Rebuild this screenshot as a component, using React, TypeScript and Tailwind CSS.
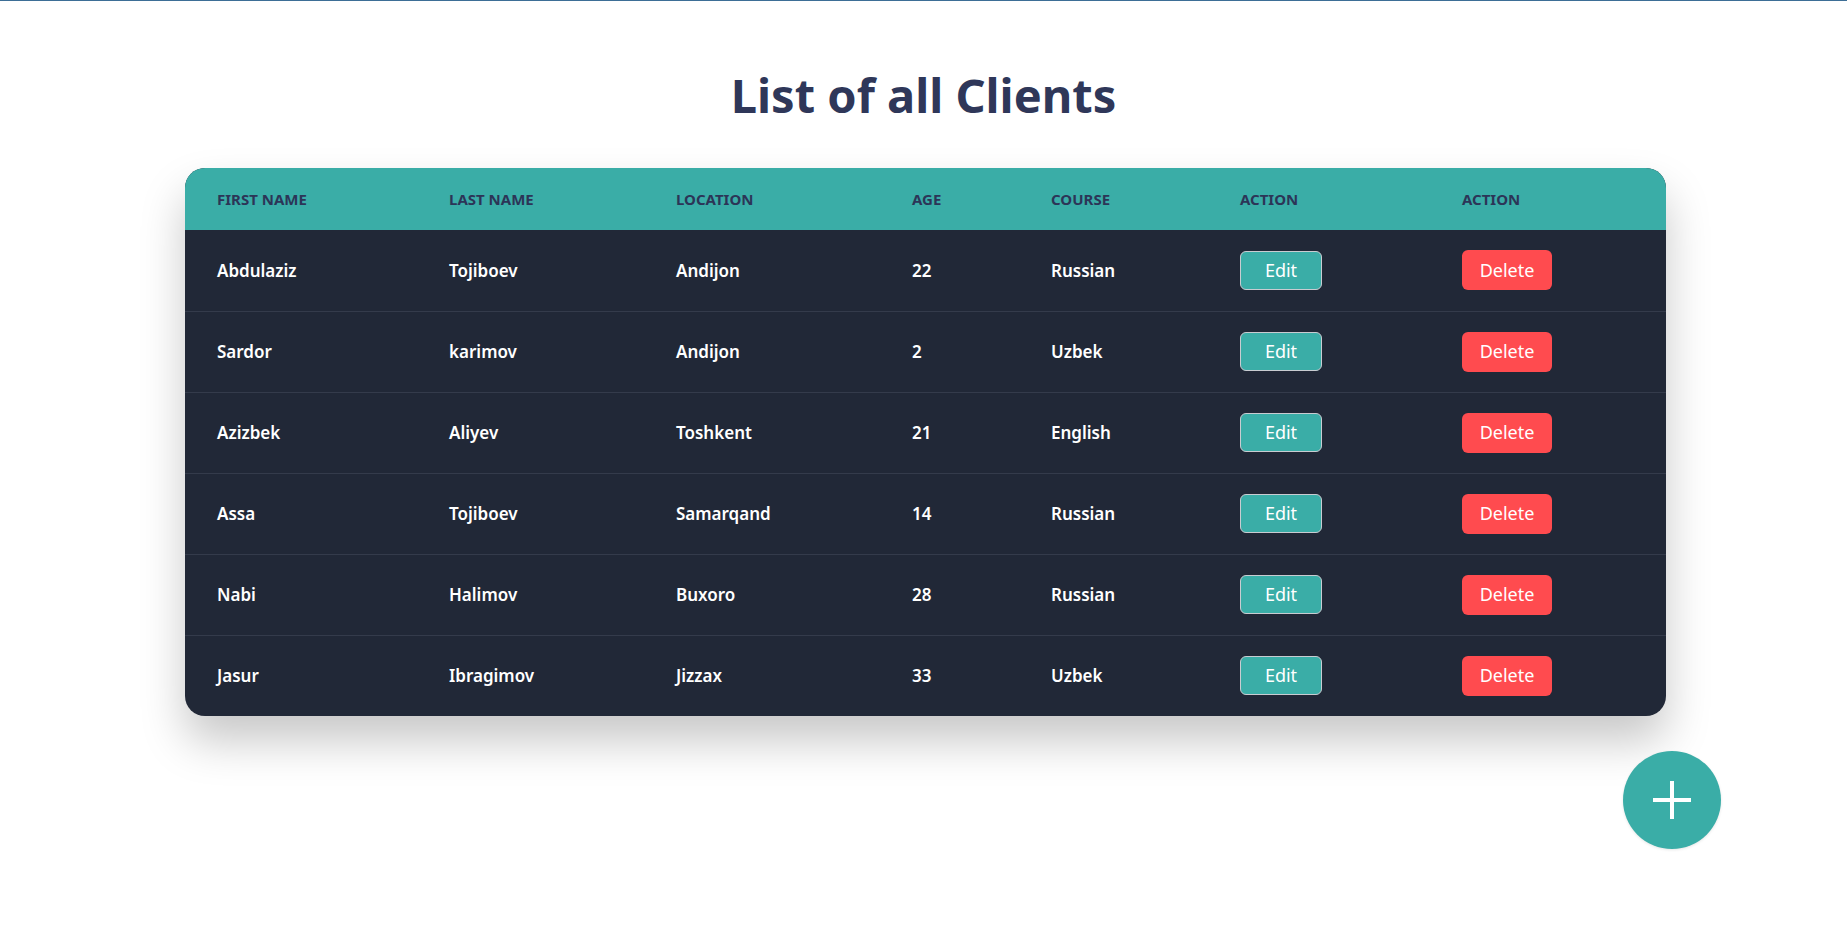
import React from 'react';

type Client = {
  firstName: string;
  lastName: string;
  location: string;
  age: number;
  course: string;
};

const clients: Client[] = [
  { firstName: 'Abdulaziz', lastName: 'Tojiboev', location: 'Andijon', age: 22, course: 'Russian' },
  { firstName: 'Sardor', lastName: 'karimov', location: 'Andijon', age: 2, course: 'Uzbek' },
  { firstName: 'Azizbek', lastName: 'Aliyev', location: 'Toshkent', age: 21, course: 'English' },
  { firstName: 'Assa', lastName: 'Tojiboev', location: 'Samarqand', age: 14, course: 'Russian' },
  { firstName: 'Nabi', lastName: 'Halimov', location: 'Buxoro', age: 28, course: 'Russian' },
  { firstName: 'Jasur', lastName: 'Ibragimov', location: 'Jizzax', age: 33, course: 'Uzbek' },
];

const headers = ['First Name', 'Last Name', 'Location', 'Age', 'Course', 'Action', 'Action'];
const colWidths = ['w-[264px]', 'w-[227px]', 'w-[236px]', 'w-[139px]', 'w-[189px]', 'w-[222px]', 'w-auto'];

const App: React.FC = () => {
  return (
    <div className="min-h-screen bg-white border-t border-[#3d6e96] font-['Noto_Sans',sans-serif]">
      <h1 className="pt-[64px] text-center text-[47px] leading-[60px] font-bold text-[#2f3759]">
        List of all Clients
      </h1>

      <div className="w-[1481px] ml-[185px] mt-[43px]">
        {/* Table */}
        <div className="rounded-[20px] overflow-hidden bg-[#212837] shadow-[0_25px_45px_rgba(0,0,0,0.22)]">
          <table className="w-full border-collapse text-left">
            <thead>
              <tr className="bg-[#3aada7] h-[62px]">
                {headers.map((h, i) => (
                  <th
                    key={i}
                    className={`${colWidths[i]} ${i === 0 ? 'pl-8' : ''} text-[15px] font-bold uppercase text-[#2c3557]`}
                  >
                    {h}
                  </th>
                ))}
              </tr>
            </thead>
            <tbody>
              {clients.map((c, idx) => (
                <tr
                  key={idx}
                  className={`h-[81px] text-white text-[17px] font-semibold ${idx < clients.length - 1 ? 'border-b border-[#343b4b]' : ''}`}
                >
                  <td className="pl-8">{c.firstName}</td>
                  <td>{c.lastName}</td>
                  <td>{c.location}</td>
                  <td>{c.age}</td>
                  <td>{c.course}</td>
                  <td>
                    <button className="h-[39px] w-[82px] rounded-md border border-[#c9ccd1] bg-[#3aada7] text-[18px] font-normal text-white">
                      Edit
                    </button>
                  </td>
                  <td>
                    <button className="h-[40px] w-[90px] rounded-md bg-[#ff4b4f] text-[18px] font-normal text-white">
                      Delete
                    </button>
                  </td>
                </tr>
              ))}
            </tbody>
          </table>
        </div>

        {/* Add button */}
        <div className="flex justify-end mt-[35px] -mr-[55px]">
          <button className="flex h-[98px] w-[98px] items-center justify-center rounded-full bg-[#3aada7] shadow-[0_1px_3px_rgba(0,0,0,0.1)]">
            <svg width="40" height="40" viewBox="0 0 40 40" fill="none">
              <path d="M20 1v38M1 20h38" stroke="white" strokeWidth="4" />
            </svg>
          </button>
        </div>
      </div>
    </div>
  );
};

export default App;
